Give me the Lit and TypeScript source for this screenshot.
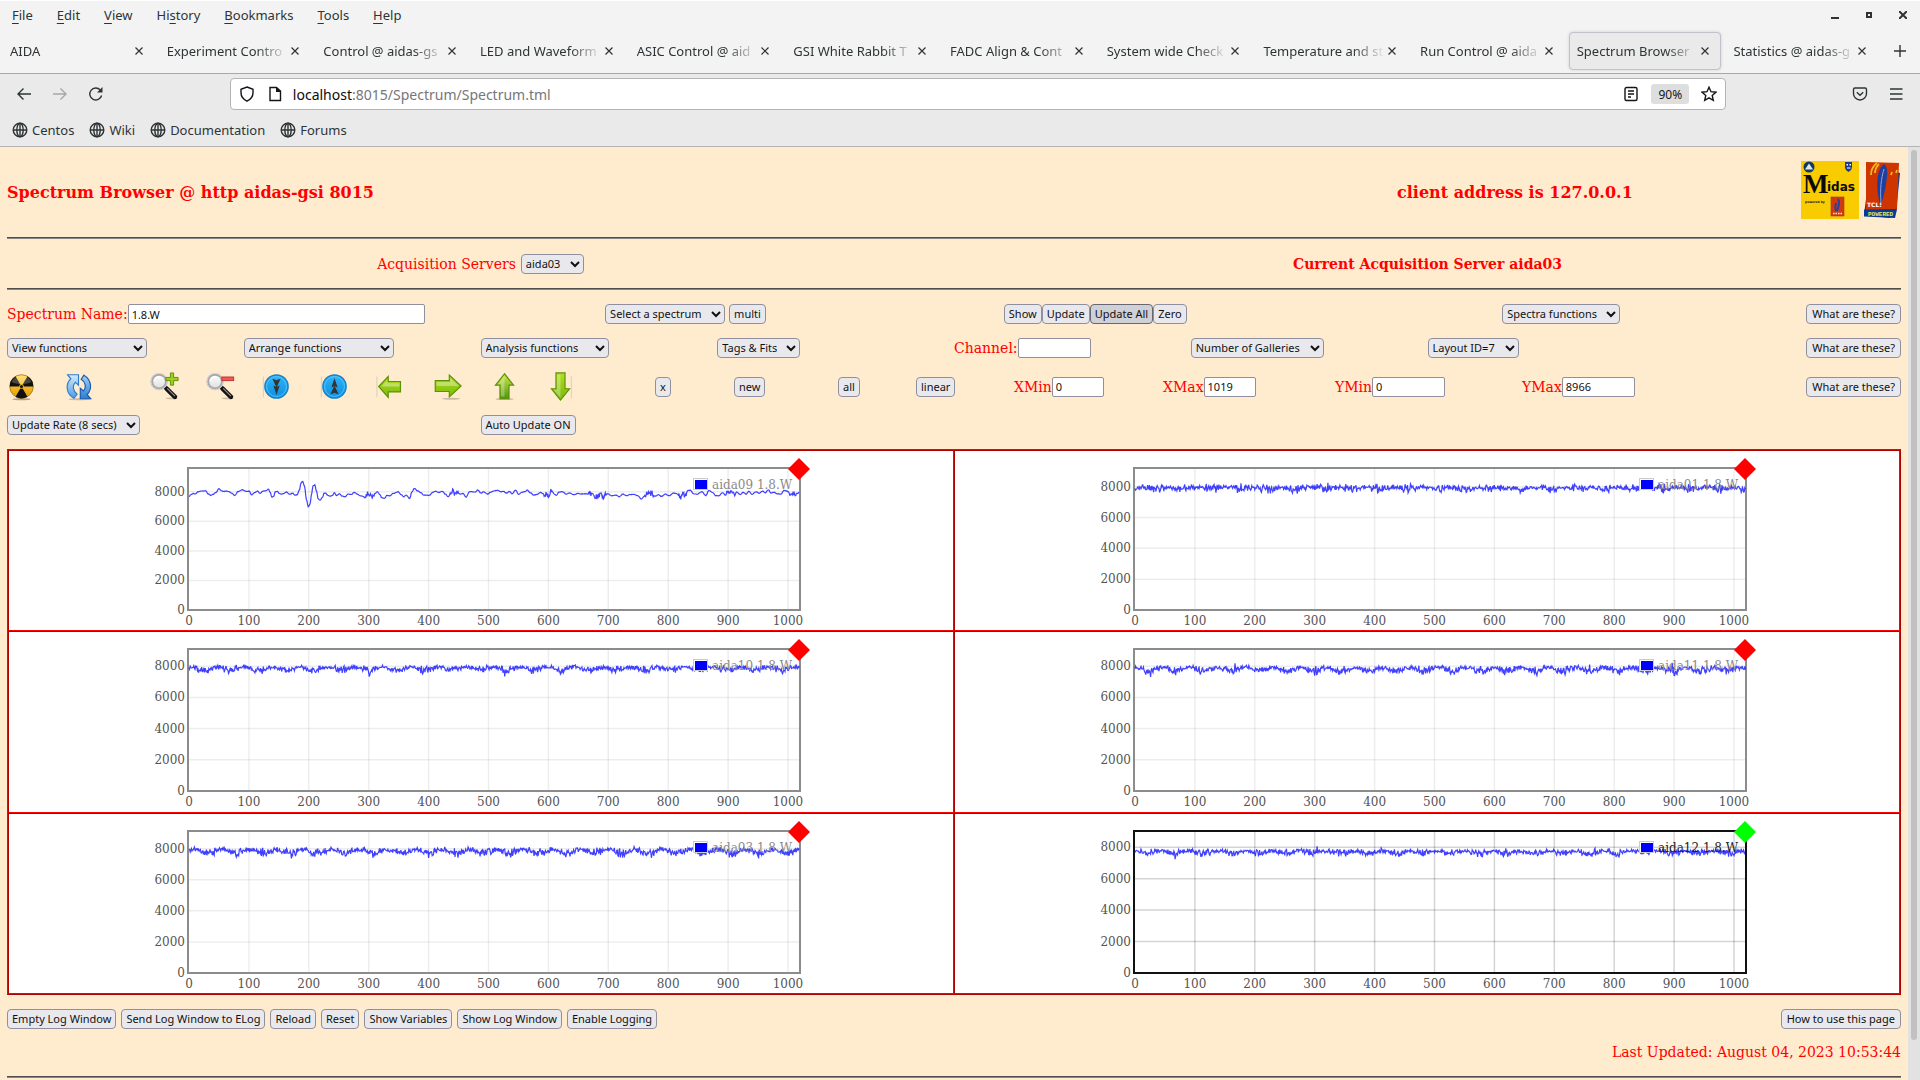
import { LitElement, html, svg, css, TemplateResult } from "lit";
import { customElement, property } from "lit/decorators.js";
import { classMap } from "lit/directives/class-map.js";

type Sample = [number, number];

interface Spectrum {
  server: string;
  max: number;
  active: boolean;
  samples: Sample[];
}

/* Pulse trace of aida09, as pairs of trace position and depth below the top of the scale. */
const PULSE_TRACE = [
  113, 140, 118, 134, 123, 131, 128, 133, 133, 126, 140, 124, 151, 123, 157, 132, 163, 137, 168, 134, 175, 128,
  182, 117, 187, 122, 193, 125, 200, 124, 206, 126, 212, 131, 219, 137, 226, 125, 236, 120, 245, 125, 252, 124,
  257, 135, 264, 129, 271, 124, 277, 131, 283, 124, 290, 123, 296, 118, 300, 127, 304, 142, 308, 140, 312, 126,
  316, 124, 322, 132, 328, 133, 338, 127, 346, 134, 352, 130, 357, 136, 362, 135, 368, 120, 371, 100, 375, 94,
  379, 108, 384, 150, 388, 171, 392, 163, 396, 130, 399, 108, 403, 105, 407, 125, 411, 148, 415, 151, 421, 143,
  424, 131, 428, 130, 433, 137, 439, 139, 444, 137, 448, 129, 453, 137, 460, 132, 466, 139, 473, 141, 480, 133,
  487, 134, 495, 128, 501, 133, 507, 138, 513, 139, 518, 143, 525, 130, 533, 141, 541, 132, 547, 126, 552, 133,
  558, 144, 564, 146, 569, 137, 576, 138, 584, 131, 595, 126, 602, 134, 608, 141, 614, 136, 622, 146, 627, 127,
  633, 116, 640, 123, 647, 128, 654, 136, 667, 137, 675, 128, 682, 124, 688, 128, 697, 125, 704, 133, 710, 141,
  716, 136, 721, 119, 725, 130, 730, 128, 738, 133, 745, 131, 752, 142, 760, 126, 768, 126, 773, 127, 779, 121,
  786, 130, 793, 126, 801, 133, 809, 127, 817, 123, 825, 122, 832, 126, 838, 125, 845, 130, 852, 125, 858, 132,
  866, 121, 873, 134, 880, 128, 888, 126, 893, 121, 900, 129, 908, 136, 916, 134, 924, 128, 931, 133, 940, 136,
  944, 134, 949, 119, 955, 133, 960, 137, 966, 127, 974, 126, 983, 133, 991, 130, 1000, 135, 1010, 131, 1016, 133,
  1025, 132, 1032, 133, 1037, 123, 1042, 135, 1052, 142, 1060, 136, 1068, 142, 1078, 132, 1088, 138, 1098, 136,
  1105, 141, 1113, 133, 1122, 138, 1130, 134, 1140, 134, 1148, 138, 1156, 148, 1163, 140, 1168, 130, 1174, 134,
  1180, 131, 1188, 140, 1195, 135, 1202, 140, 1212, 133, 1220, 138, 1230, 130, 1238, 132, 1246, 142, 1252, 134,
  1256, 139, 1264, 122, 1270, 122, 1276, 132, 1286, 133, 1295, 126, 1305, 137, 1312, 122, 1320, 128, 1328, 138,
  1335, 138, 1343, 129, 1350, 136, 1356, 125, 1363, 122, 1370, 134, 1376, 127, 1384, 134, 1391, 128, 1397, 133,
  1404, 125, 1411, 134, 1420, 126, 1428, 130, 1436, 124, 1442, 129, 1449, 120, 1455, 130, 1462, 127, 1468, 132,
  1478, 133, 1485, 122, 1492, 124, 1500, 132, 1506, 128, 1512, 130, 1520, 127,
];

function random(seed: number) {
  let state = seed;
  return () => {
    state = (state * 1664525 + 1013904223) >>> 0;
    return state / 4294967296;
  };
}

function pulse(): Sample[] {
  const next = random(9);
  const bursts = [302, 442, 600, 675, 690, 768, 825, 905, 1010];
  const anchor = (i: number): Sample => [(PULSE_TRACE[i] - 113) * 0.724, 8000 - (PULSE_TRACE[i + 1] - 126) * 22.5];
  const out: Sample[] = [];
  for (let i = 0; i < PULSE_TRACE.length - 2; i += 2) {
    const [x0, y0] = anchor(i);
    const [x1, y1] = anchor(i + 2);
    for (let x = Math.ceil(x0); x < x1; x++) {
      const t = (1 - Math.cos((Math.PI * (x - x0)) / (x1 - x0))) / 2;
      const burst = bursts.some((b) => Math.abs(b - x) < 8) ? (next() - 0.5) * 380 : (next() - 0.5) * 30;
      out.push([x, y0 + (y1 - y0) * t + burst]);
    }
  }
  return out;
}

function baseline(seed: number, mean: number, ripple: number, period: number, noise: number): Sample[] {
  const next = random(seed);
  const out: Sample[] = [];
  for (let x = 0; x < 1020; x++) {
    const phase = (2 * Math.PI * (x + seed)) / period;
    const wave = Math.sin(phase) * ripple;
    const spread = noise * (1 - 0.35 * Math.sin(phase));
    const spike = next() > 0.97 ? 1.6 : 1;
    out.push([x, mean + wave + (next() + next() - 1) * spread * spike]);
  }
  return out;
}

const SPECTRA: Spectrum[] = [
  { server: "aida09", max: 9540, active: false, samples: pulse() },
  { server: "aida01", max: 9150, active: false, samples: baseline(1, 7910, 40, 47, 270) },
  { server: "aida10", max: 9040, active: false, samples: baseline(10, 7850, 90, 46, 230) },
  { server: "aida11", max: 9040, active: false, samples: baseline(11, 7800, 110, 46, 250) },
  { server: "aida03", max: 9070, active: false, samples: baseline(3, 7830, 120, 46, 270) },
  { server: "aida12", max: 8966, active: true, samples: baseline(12, 7690, 70, 46, 230) },
];

@customElement("spectrum-plot")
export class SpectrumPlot extends LitElement {
  @property({ attribute: false }) spectrum!: Spectrum;

  static styles = css`
    :host {
      display: block;
    }
    .plot {
      display: block;
      width: 664px;
      height: 178px;
      font-family: "DejaVu Serif", serif;
      font-size: 12px;
    }
    .tick {
      fill: #545454;
    }
    .frame {
      fill: none;
      stroke: #8c8c8c;
      stroke-width: 2;
    }
    .grid {
      stroke: #000;
      stroke-opacity: 0.07;
      stroke-width: 1.5;
    }
    .trace {
      fill: none;
      stroke: #00f;
      stroke-opacity: 0.75;
      stroke-width: 1.2;
    }
    .legend {
      fill: #8a8a8a;
    }
    .marker {
      fill: #f00;
    }
    .active .frame {
      stroke: #111;
    }
    .active .grid {
      stroke-opacity: 0.17;
    }
    .active .legend {
      fill: #222;
    }
    .active .marker {
      fill: #0f0;
    }
    .swatch-frame {
      fill: #fff;
      stroke: #ccc;
    }
    .swatch {
      fill: #00f;
    }
  `;

  render() {
    const { server, max, active, samples } = this.spectrum;
    const px = (v: number) => 40 + v * 0.599;
    const py = (v: number) => 159 - (v / max) * 141;
    const points = samples.map(([x, y]) => `${px(x).toFixed(1)},${py(y).toFixed(1)}`).join(" ");
    const xs = Array.from({ length: 11 }, (_, i) => i * 100);
    const ys = [0, 2000, 4000, 6000, 8000];
    return html`
      <svg class=${classMap({ plot: true, active })} viewBox="0 0 664 178" role="img" aria-label="${server} 1.8.W">
        ${xs.slice(1).map((v) => svg`<line class="grid" x1=${px(v)} x2=${px(v)} y1="18" y2="158" />`)}
        ${ys.slice(1).map((v) => svg`<line class="grid" x1="40" x2="650" y1=${py(v)} y2=${py(v)} />`)}
        <rect class="frame" x="39" y="17" width="612" height="142" />
        ${xs.map((v) => svg`<text class="tick" text-anchor="middle" x=${px(v)} y="174">${v}</text>`)}
        ${ys.map((v) => svg`<text class="tick" text-anchor="end" x="36" y=${Math.round(py(v)) + 4}>${v}</text>`)}
        <polyline class="trace" points=${points} />
        <rect class="swatch-frame" x="544.5" y="27.5" width="14" height="11" />
        <rect class="swatch" x="546" y="29" width="12" height="9" />
        <text class="legend" x="563" y="38">${server} 1.8.W</text>
        <path class="marker" d="M650 7l11 11-11 11-11-11z" />
      </svg>
    `;
  }
}

const line = (paths: TemplateResult, size = 16) => html`
  <svg class="line-icon" width=${size} height=${size} viewBox="0 0 16 16" aria-hidden="true">${paths}</svg>
`;

const icons = {
  back: svg`<path d="M15 8H2M7.500 2.500L2 8l5.500 5.500" />`,
  forward: svg`<path d="M1 8h13M8.500 2.500L14 8l-5.500 5.500" />`,
  reload: svg`<path d="M13.600 9.500A6 6 0 1 1 12.300 4" /><path class="solid" d="M14.500 1v5.500H9z" />`,
  shield: svg`<path d="M8 1l6 2.300v3.500c0 4-2.600 6.700-6 8.400-3.400-1.700-6-4.400-6-8.400V3.300z" />`,
  page: svg`<path d="M3 1.500h6.500L13.500 5v9.500H3z" /><path class="solid" d="M9 1l5 5H9z" />`,
  reader: svg`<rect x="2" y="1.500" width="12" height="13" rx="1.500" /><path d="M5 5h6M5 8h6M5 11h3" />`,
  star: svg`<path d="M8 1.200l2 4.500 4.900.5-3.700 3.300 1.100 4.900L8 11.900l-4.300 2.500 1.100-4.900L1.100 6.200 6 5.700z" />`,
  pocket: svg`<path d="M3 2h10a1.500 1.500 0 0 1 1.500 1.500V7.500a6.500 6.500 0 0 1-13 0V3.500A1.500 1.500 0 0 1 3 2z" /><path d="M4.800 6.200L8 9.200l3.200-3" />`,
  menu: svg`<path d="M2 3h12.500M2 8h12.500M2 13h12.500" />`,
  globe: svg`<circle cx="8" cy="8" r="6.800" /><ellipse cx="8" cy="8" rx="3.200" ry="6.800" /><path d="M1.200 8h13.600M8 1.200v13.600" />`,
  close: svg`<path d="M4 4l8 8M12 4l-8 8" />`,
  plus: svg`<path d="M8 2v12M2 8h12" />`,
};

const tool = (art: TemplateResult) => html`
  <svg width="29" height="29" viewBox="0 0 32 32" aria-hidden="true">${art}</svg>
`;

const magnifier = svg`
  <ellipse cx="24" cy="29" rx="7" ry="1" fill="#000" opacity=".2" />
  <path d="M18 18l9.500 9.500" stroke="#111" stroke-width="5" stroke-linecap="round" />
  <path d="M19 18l8.500 8.500" stroke="#999" stroke-width="1.200" />
  <circle cx="10" cy="10.500" r="8" fill="url(#glass)" stroke="#a9a9a9" stroke-width="3" />
  <circle cx="10" cy="10.500" r="9" fill="none" stroke="#ddd" />
  <path d="M5 9.500a5 5 0 0 1 6-4" stroke="#fff" stroke-width="2" fill="none" />
`;

const disc = svg`
  <path d="M1.500 5v23" stroke="#bba" stroke-width="1" opacity=".6" />
  <circle cx="16" cy="16" r="12.800" fill="url(#sky)" stroke="#1583c9" stroke-width="1.600" />
  <circle cx="16" cy="16" r="11" fill="none" stroke="#5cc6fb" stroke-width="1" />
`;

const TOOLS: { label: string; art: TemplateResult }[] = [
  {
    label: "Radiation",
    art: svg`
      <ellipse cx="16" cy="30" rx="10" ry="1.200" fill="#000" opacity=".3" />
      <circle cx="16" cy="16" r="13" fill="url(#gold)" stroke="#a36a00" stroke-width=".8" />
      <path d="M16 16L9.400 4.600a13 13 0 0 0-6.400 11.400z M16 16h13A13 13 0 0 0 22.600 4.600z M16 16L9.400 27.400a13 13 0 0 0 13.200 0z" fill="#111" />
      <circle cx="16" cy="16" r="2.600" fill="#f2b50a" />
      <circle cx="16" cy="16" r="1.700" fill="#111" />
      <path d="M5 11a12 12 0 0 1 22 0c-6 3-16 3-22 0z" fill="#fff" opacity=".22" />
    `,
  },
  {
    label: "Refresh",
    art: svg`
      <ellipse cx="17" cy="30" rx="12" ry="1.200" fill="#000" opacity=".2" />
      <path d="M4 3h12v11.500l-3.500-3c-3.500 3.500-3 9 2 13l-3.500 4.500C2 24 1.500 13 7.500 7.500z" fill="url(#pale)" stroke="#2f7fd0" stroke-width="1.300" />
      <path d="M29.500 29.500H18v-11.500l3.500 3c3.500-4 2.500-10-2.500-13L22 3.500c9 5.500 9 16 3.500 21.500z" fill="url(#blue)" stroke="#1b5cae" stroke-width="1.300" />
    `,
  },
  { label: "Zoom in", art: svg`${magnifier}<path d="M22.500 1h3.500v5h5v3.500h-5v5h-3.500v-5h-5V6h5z" fill="#9bd21b" stroke="#5c8a05" />` },
  { label: "Zoom out", art: svg`${magnifier}<rect x="17.500" y="5.500" width="13" height="4" fill="#ec5b55" stroke="#c22f2a" />` },
  { label: "Page down", art: svg`${disc}<path d="M11.500 7.500l4.500 1.500 4.500-1.500L16 17z M12.500 15l3.500 1.500 3.500-1.500L16 25z" fill="#333" />` },
  { label: "Page up", art: svg`${disc}<path d="M11.500 24.500l4.500-1.500 4.500 1.500L16 15z M12.500 17l3.500-1.500 3.500 1.500L16 7z" fill="#333" />` },
  { label: "Left", art: svg`<path d="M1 5v23" stroke="#bba" opacity=".6" /><path d="M3 16L13.500 5v5.500h13.500v11.500H13.500v6z" fill="url(#green)" stroke="#5d9206" stroke-width="1.300" /><path d="M6 16l6.500-7v3.500H26V16z" fill="#fff" opacity=".35" />` },
  { label: "Right", art: svg`<ellipse cx="20" cy="29.500" rx="10" ry="1" fill="#000" opacity=".2" /><path d="M31 15.500L18 3.500V9.500H2.500v12H18v6z" fill="url(#green)" stroke="#5d9206" stroke-width="1.300" /><path d="M28.500 15.500L19 7v4H4v4.500z" fill="#fff" opacity=".35" />` },
  { label: "Up", art: svg`<ellipse cx="16" cy="30" rx="10" ry="1" fill="#000" opacity=".25" /><path d="M16 2L6 14.500h5v15h10v-15h5z" fill="url(#lime)" stroke="#5d9206" stroke-width="1.300" /><path d="M16 4.500L8.500 13.500h3.500V27H16z" fill="#fff" opacity=".3" />` },
  { label: "Down", art: svg`<path d="M28 4v25" stroke="#bba" opacity=".6" /><path d="M16 31L6 18.500h5V1h10v17.500h5z" fill="url(#green)" stroke="#5d9206" stroke-width="1.300" /><path d="M16 28.500L8.500 19.500h3.500V3H16z" fill="#fff" opacity=".3" />` },
];

const TABS = [
  "AIDA",
  "Experiment Contro",
  "Control @ aidas-gs",
  "LED and Waveform",
  "ASIC Control @ aid",
  "GSI White Rabbit T",
  "FADC Align & Cont",
  "System wide Check",
  "Temperature and st",
  "Run Control @ aida",
  "Spectrum Browser",
  "Statistics @ aidas-g",
];

const MENUS: [string, string, string][] = [
  ["", "F", "ile"],
  ["", "E", "dit"],
  ["", "V", "iew"],
  ["Hi", "s", "tory"],
  ["", "B", "ookmarks"],
  ["", "T", "ools"],
  ["", "H", "elp"],
];

const LOG_ACTIONS = [
  "Empty Log Window",
  "Send Log Window to ELog",
  "Reload",
  "Reset",
  "Show Variables",
  "Show Log Window",
  "Enable Logging",
];

@customElement("app-root")
export class AppRoot extends LitElement {
  static styles = css`
    :host {
      display: flex;
      flex-direction: column;
      height: 100vh;
      overflow: hidden;
      font-family: "Noto Sans", sans-serif;
      font-size: 13px;
      color: #2e3436;
      background: #eaeaea;
    }
    * {
      box-sizing: border-box;
    }
    button,
    input,
    select {
      font: inherit;
      color: inherit;
      margin: 0;
    }
    .menubar,
    .tabs,
    .nav,
    .bookmarks {
      display: flex;
      align-items: center;
      flex: none;
    }
    .plain {
      display: flex;
      align-items: center;
      justify-content: center;
      border: 0;
      padding: 0;
      background: none;
    }
    .line-icon {
      display: block;
      flex: none;
      fill: none;
      stroke: currentColor;
      stroke-width: 1.4;
    }
    .line-icon .solid {
      fill: currentColor;
      stroke: none;
    }
    .menubar {
      height: 30px;
      padding-bottom: 2px;
      border-top: 1px solid #fff;
      background: #f3f3f3;
    }
    .menu {
      display: block;
      padding: 0 12px;
    }
    .mnemonic {
      text-decoration: underline;
      text-underline-offset: 3px;
    }
    .window-buttons {
      display: flex;
      margin-left: auto;
    }
    .window-button {
      width: 34px;
      height: 24px;
    }
    .tabs {
      height: 44px;
      padding: 2px 0 3px;
      border-bottom: 1px solid #a8a8a8;
      background: #f3f3f3;
    }
    .tab {
      display: flex;
      flex: 1 1 0;
      align-items: center;
      min-width: 0;
      height: 38px;
      margin: 0 2px;
      padding: 0 8px 0 7px;
      border: 1px solid transparent;
      border-radius: 4px;
    }
    .tab.selected {
      background: #eaeaea;
      border-color: #c3c1cd;
      box-shadow: 0 0 3px #ccc;
    }
    .tab-title {
      flex: 1;
      min-width: 0;
      overflow: hidden;
      padding: 0;
      border: 0;
      background: none;
      text-align: left;
      white-space: nowrap;
      mask-image: linear-gradient(to left, transparent, #000 32px);
    }
    .new-tab {
      width: 40px;
      height: 38px;
    }
    .nav {
      height: 40px;
      padding: 0 6px;
    }
    .nav-button {
      width: 36px;
      height: 32px;
    }
    .dim {
      color: #a5a7a8;
    }
    .spring {
      flex: 117 1 0;
    }
    .urlbar {
      display: flex;
      flex: 1493 1 0;
      align-items: center;
      gap: 12px;
      height: 32px;
      padding: 0 8px;
      border: 1px solid #b4b4b4;
      border-radius: 4px;
      background: #fff;
      color: #15141a;
    }
    .address {
      display: flex;
      flex: 1;
      margin-left: -2px;
      color: #767679;
      font-size: 14px;
    }
    .host {
      color: #0c0c0d;
    }
    .zoom-level {
      height: 20px;
      padding: 0 7px;
      border-radius: 3px;
      background: #dedede;
      font-size: 12px;
    }
    .bookmarks {
      height: 33px;
      padding: 0 12px 1px;
      gap: 15px;
      border-bottom: 1px solid #b4b4b4;
    }
    .bookmark {
      display: flex;
      align-items: center;
      gap: 4px;
      color: inherit;
      text-decoration: none;
    }
    .viewport {
      display: flex;
      flex: 1;
      min-height: 0;
      background: #ffebcd;
    }
    .page {
      display: flex;
      flex: 1;
      flex-direction: column;
      gap: 14px;
      min-width: 0;
      padding: 0 7px;
      overflow: hidden;
      color: #f00;
      font-family: "DejaVu Serif", serif;
      font-size: 14px;
    }
    .page > * {
      flex: none;
    }
    .scrollbar {
      flex: none;
      width: 12px;
      padding: 3px;
      background: #e2e2e2;
    }
    .thumb {
      height: 96%;
      border-radius: 3px;
      background: #c1c1c1;
    }
    .banner {
      display: grid;
      grid-template-columns: 1390fr 236fr 268fr;
      align-items: center;
      height: 90px;
      margin-bottom: -14px;
    }
    .title,
    .client,
    .current {
      margin: 0;
      font-size: 16px;
      font-weight: bold;
      white-space: nowrap;
    }
    .logos {
      display: flex;
      gap: 4px;
      justify-content: flex-end;
      padding-bottom: 4px;
    }
    .rule {
      width: 100%;
      height: 2px;
      margin: 0;
      border: 0;
      border-top: 1px solid #4e4e50;
      background: #87878a;
    }
    .row {
      display: grid;
      align-items: center;
      min-height: 20px;
    }
    .servers {
      grid-template-columns: 1fr 1fr;
      justify-items: center;
      min-height: 21px;
    }
    .current {
      font-size: 14px;
    }
    .name-row {
      grid-template-columns: 6fr 4fr 5fr 4fr;
    }
    .function-row {
      grid-template-columns: repeat(8, minmax(0, 1fr));
    }
    .tool-row {
      grid-template-columns:
        57fr 86fr 56fr 56fr 58fr 56fr 57fr 57fr 56fr 109fr
        79fr 104fr 78fr 98fr 149fr 172fr 187fr 379fr;
      min-height: 29px;
    }
    .tool-row > * {
      min-width: 0;
    }
    .rate-row {
      grid-template-columns: 1fr 3fr;
    }
    .group {
      display: flex;
      align-items: center;
      gap: 4px;
      min-width: 0;
    }
    .tight {
      gap: 0;
    }
    .spread {
      justify-content: space-between;
    }
    .field {
      display: flex;
      align-items: center;
      height: 20px;
      line-height: 18px;
      white-space: nowrap;
    }
    .gap {
      gap: 5px;
    }
    .btn,
    .select,
    .text {
      height: 20px;
      border: 1px solid #8f8f9d;
      border-radius: 4px;
      background: #e9e9ed;
      color: #111;
      font-family: "Noto Sans", sans-serif;
      font-size: 11px;
      line-height: 18px;
      white-space: nowrap;
    }
    .btn {
      padding: 0 4px;
    }
    .btn.help {
      padding: 0 5px;
    }
    .btn.hover {
      border-color: #676774;
      background: #d0d0d7;
    }
    .pick {
      display: inline-grid;
      align-items: center;
      justify-items: end;
    }
    .pick > * {
      grid-area: 1 / 1;
    }
    .select {
      width: 100%;
      padding: 0 22px 0 4px;
      appearance: none;
    }
    .chevron {
      margin-right: 4px;
      fill: none;
      stroke: #111;
      stroke-width: 2;
      pointer-events: none;
    }
    .w-view {
      width: 140px;
    }
    .w-arrange {
      width: 150px;
    }
    .w-analysis {
      width: 128px;
    }
    .text {
      width: 73px;
      padding: 0 3px;
      border-radius: 2px;
      background: #fff;
    }
    .text.short {
      width: 52px;
    }
    .text.long {
      width: 297px;
    }
    .tool {
      width: 29px;
      height: 29px;
    }
    .gallery {
      display: grid;
      grid-template-columns: 1fr 1fr;
      grid-auto-rows: 1fr;
      min-height: 546px;
      border: 1px solid;
      border-color: #f00 #b00000 #b00000 #f00;
      background: #fff;
    }
    .cell {
      display: flex;
      justify-content: center;
      overflow: hidden;
      border: 1px solid;
      border-color: #b00000 #f00 #f00 #b00000;
    }
    .updated {
      margin: 0;
      line-height: 19px;
      text-align: right;
    }
    .defs {
      position: absolute;
      width: 0;
      height: 0;
    }
  `;

  private chevron() {
    return html`<svg class="chevron" width="10" height="10" viewBox="0 0 10 10" aria-hidden="true"><path d="M1 3l4 4 4-4" /></svg>`;
  }

  private select(label: string, width = "") {
    return html`
      <span class="pick ${width}">
        <select class="select" aria-label=${label}>
          <option>${label}</option>
        </select>
        ${this.chevron()}
      </span>
    `;
  }

  private field(id: string, label: string, value: string, size = "") {
    return html`
      <span class="field">
        <label for=${id}>${label}</label>
        <input class="text ${size}" id=${id} type="text" .value=${value} />
      </span>
    `;
  }

  private button(label: string, kind = "") {
    return html`<button class="btn ${kind}" type="button">${label}</button>`;
  }

  private help() {
    return this.button("What are these?", "help");
  }

  private gradient(id: string, from: string, to: string) {
    return svg`<linearGradient id=${id} x1="0" y1="0" x2="0" y2="1"><stop offset="0" stop-color=${from} /><stop offset="1" stop-color=${to} /></linearGradient>`;
  }

  private renderChrome() {
    return html`
      <div class="menubar">
        ${MENUS.map(([before, key, after]) => html`<button class="plain menu" type="button">${before}<span class="mnemonic">${key}</span>${after}</button>`)}
        <div class="window-buttons">
          <button class="plain window-button" type="button" aria-label="Minimise">
            <svg width="8" height="8" viewBox="0 0 8 8"><path d="M0 6h8v2H0z" fill="#2e3436" /></svg>
          </button>
          <button class="plain window-button" type="button" aria-label="Maximise">
            <svg width="6" height="6" viewBox="0 0 6 6"><path d="M1 1h4v4H1z" fill="none" stroke="#2e3436" stroke-width="2" /></svg>
          </button>
          <button class="plain window-button" type="button" aria-label="Close">
            <svg width="8" height="8" viewBox="0 0 8 8"><path d="M0 0l8 8M8 0L0 8" stroke="#2e3436" stroke-width="2" /></svg>
          </button>
        </div>
      </div>
      <div class="tabs">
        ${TABS.map(
          (title) => html`
            <div class=${classMap({ tab: true, selected: title.startsWith("Spectrum") })}>
              <button class="tab-title" type="button">${title}</button>
              <button class="plain" type="button" aria-label="Close tab">${line(icons.close, 14)}</button>
            </div>
          `,
        )}
        <button class="plain new-tab" type="button" aria-label="New tab">${line(icons.plus)}</button>
      </div>
      <div class="nav">
        <button class="plain nav-button" type="button" aria-label="Back">${line(icons.back)}</button>
        <button class="plain nav-button dim" type="button" aria-label="Forward">${line(icons.forward)}</button>
        <button class="plain nav-button" type="button" aria-label="Reload">${line(icons.reload)}</button>
        <div class="spring"></div>
        <div class="urlbar">
          ${line(icons.shield)} ${line(icons.page)}
          <div class="address"><span class="host">localhost</span><span>:8015/Spectrum/Spectrum.tml</span></div>
          ${line(icons.reader)}
          <button class="plain zoom-level" type="button">90%</button>
          ${line(icons.star)}
        </div>
        <div class="spring"></div>
        <button class="plain nav-button" type="button" aria-label="Pocket">${line(icons.pocket)}</button>
        <button class="plain nav-button" type="button" aria-label="Menu">${line(icons.menu)}</button>
      </div>
      <nav class="bookmarks">
        ${["Centos", "Wiki", "Documentation", "Forums"].map((name) => html`<a class="bookmark" href="#">${line(icons.globe)}${name}</a>`)}
      </nav>
    `;
  }

  private renderLogos() {
    return html`
      <div class="logos">
        <svg width="58" height="58" viewBox="0 0 58 58" role="img" aria-label="Midas">
          <rect width="58" height="58" fill="#f8cc00" />
          <circle cx="8" cy="6" r="5.500" fill="#123a63" />
          <path d="M4 8.500l2-3 2-3 2 3 2 3z" fill="#dfe8ee" />
          <path d="M44 1h7v5c0 2-1.500 4-3.500 5C45.500 10 44 8 44 6z" fill="#1d3c8c" />
          <path d="M45.500 3h1.500v1.500h-1.500zM48.500 3H50v1.500h-1.500zM46 6.500h3.500v1H46z" fill="#fff" />
          <text x="2" y="32" font-family="Liberation Serif, serif" font-size="27" font-weight="bold" fill="#0a0a0a">M</text>
          <text x="26" y="30" font-family="DejaVu Sans, sans-serif" font-size="12" font-weight="bold" fill="#0a0a0a">idas</text>
          <text x="4" y="42" font-family="DejaVu Sans, sans-serif" font-size="3" font-weight="bold" fill="#111">powered by</text>
          <rect x="30" y="36" width="13" height="19" fill="#d03a10" stroke="#a33" stroke-width=".6" />
          <path d="M37 38c2 3 1 7-1 12M35 42c-1 3-1 5 0 8" stroke="#26429c" stroke-width="2" fill="none" />
          <path d="M32 52.500h9" stroke="#eee" stroke-width="1.400" stroke-dasharray="1.500 1" />
        </svg>
        <svg width="38" height="58" viewBox="0 0 38 58" role="img" aria-label="Tcl powered">
          <path d="M33 11l4 1-4 40-6 5-26-3 2-16z" fill="#0a3a95" />
          <path d="M3 1l33 1-2 46-31 2z" fill="#cf3500" />
          <path d="M8 14c0-5 2-9 6-12M12 12c0-4 2-7 4-9M28 14l1-3M33 12l1-3" stroke="#f6b61c" stroke-width="1.800" fill="none" />
          <path d="M21 3c5 4 3 12 2 20s-3 12-4 19l-2 1c-2-8-4-20-2-28 1-6 3-10 6-12z" fill="#1f3f9e" />
          <path d="M21 8c-3 10-4 20-3 34" stroke="#8ea6dd" stroke-width="1" fill="none" />
          <text x="4" y="46" font-family="DejaVu Sans, sans-serif" font-size="6" font-weight="bold" fill="#fff">TCL!</text>
          <path d="M1 48.500l33-.5-2 9-31-1.500z" fill="#0a3a95" />
          <text x="5" y="55" font-family="Liberation Mono, monospace" font-size="6" font-weight="bold" fill="#e8e85a">POWERED</text>
        </svg>
      </div>
    `;
  }

  render() {
    return html`
      ${this.renderChrome()}
      <div class="viewport">
        <main class="page">
          <header class="banner">
            <h1 class="title">Spectrum Browser @ http aidas-gsi 8015</h1>
            <h2 class="client">client address is 127.0.0.1</h2>
            ${this.renderLogos()}
          </header>
          <hr class="rule" />
          <div class="row servers">
            <span class="field gap">
              <label for="server">Acquisition Servers</label>
              <span class="pick">
                <select class="select" id="server">
                  <option>aida03</option>
                </select>
                ${this.chevron()}
              </span>
            </span>
            <h3 class="current">Current Acquisition Server aida03</h3>
          </div>
          <hr class="rule" />
          <div class="row name-row">
            ${this.field("name", "Spectrum Name:", "1.8.W", "long")}
            <div class="group">${this.select("Select a spectrum")}${this.button("multi")}</div>
            <div class="group tight">
              ${this.button("Show")}${this.button("Update")}${this.button("Update All", "hover")}${this.button("Zero")}
            </div>
            <div class="group spread">${this.select("Spectra functions")}${this.help()}</div>
          </div>
          <div class="row function-row">
            <div class="group">${this.select("View functions", "w-view")}</div>
            <div class="group">${this.select("Arrange functions", "w-arrange")}</div>
            <div class="group">${this.select("Analysis functions", "w-analysis")}</div>
            <div class="group">${this.select("Tags & Fits")}</div>
            ${this.field("channel", "Channel:", "")}
            <div class="group">${this.select("Number of Galleries")}</div>
            <div class="group">${this.select("Layout ID=7")}</div>
            <div class="group spread"><span></span>${this.help()}</div>
          </div>
          <div class="row tool-row">
            ${TOOLS.map(({ label, art }) => html`<button class="plain tool" type="button" aria-label=${label}>${tool(art)}</button>`)}
            <div class="group">${this.button("x")}</div>
            <div class="group">${this.button("new")}</div>
            <div class="group">${this.button("all")}</div>
            <div class="group">${this.button("linear")}</div>
            ${this.field("xmin", "XMin", "0", "short")} ${this.field("xmax", "XMax", "1019", "short")}
            ${this.field("ymin", "YMin", "0")}
            <div class="group spread">${this.field("ymax", "YMax", "8966")}${this.help()}</div>
          </div>
          <div class="row rate-row">
            <div class="group">${this.select("Update Rate (8 secs)")}</div>
            <div class="group">${this.button("Auto Update ON")}</div>
          </div>
          <section class="gallery">
            ${SPECTRA.map((spectrum) => html`<div class="cell"><spectrum-plot .spectrum=${spectrum}></spectrum-plot></div>`)}
          </section>
          <div class="group spread">
            <div class="group gap">${LOG_ACTIONS.map((label) => this.button(label))}</div>
            ${this.button("How to use this page", "help")}
          </div>
          <p class="updated">Last Updated: August 04, 2023 10:53:44</p>
          <hr class="rule" />
        </main>
        <div class="scrollbar"><div class="thumb"></div></div>
      </div>
      <svg class="defs" aria-hidden="true">
        <defs>
          ${this.gradient("gold", "#ffd84a", "#e79a05")} ${this.gradient("pale", "#d6ecfb", "#4b9ce4")}
          ${this.gradient("blue", "#a5d2f5", "#2c7cd6")} ${this.gradient("sky", "#2fb4f6", "#0c8fe0")}
          ${this.gradient("green", "#b4dd20", "#7ab90c")} ${this.gradient("lime", "#cdea50", "#4f9408")}
          ${this.gradient("glass", "#ffffff", "#dedede")}
        </defs>
      </svg>
    `;
  }
}
